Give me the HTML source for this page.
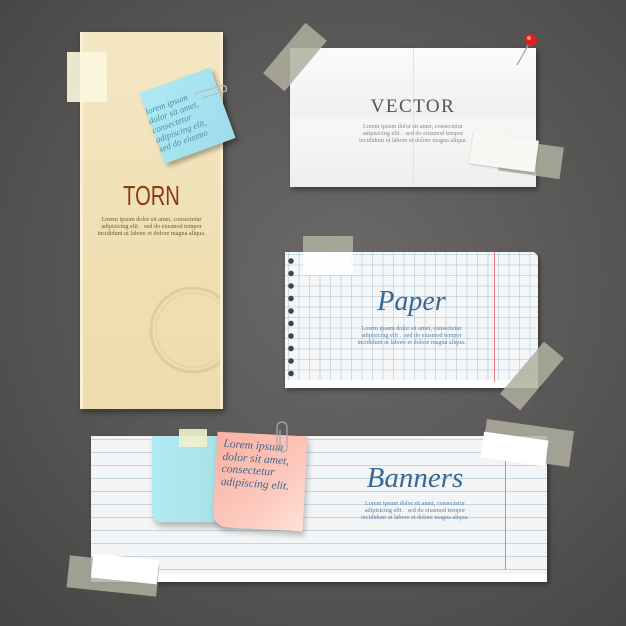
<!DOCTYPE html>
<html><head><meta charset="utf-8">
<style>
*{margin:0;padding:0;box-sizing:border-box}
body{width:626px;height:626px;overflow:hidden;position:relative;background:radial-gradient(ellipse at 55% 45%,#6c6a68 0%,#5a5856 50%,#464442 100%);font-family:"Liberation Serif",serif}
.a{position:absolute}
.body{font-size:6.2px;line-height:7.2px;text-align:center;white-space:nowrap}
.script{font-family:"Liberation Serif",serif;font-style:italic}
.tape{background:rgba(175,175,160,0.85)}
.vec{font-family:"Liberation Serif",serif;font-size:19px;color:#555;letter-spacing:1.5px}
</style></head><body>

<!-- Torn paper -->
<div class="a" style="left:80px;top:32px;width:143px;height:377px;background:linear-gradient(180deg,#f4e7c3,#efdfb3 60%,#eedcae);box-shadow:2px 3px 6px rgba(0,0,0,.4);border-left:3px solid #f8efd4;border-right:3px solid #f6ecd0;overflow:hidden">
<svg class="a" style="left:55px;top:228px" width="90" height="140"><circle cx="55" cy="70" r="42" fill="none" stroke="#d9bc8a" stroke-width="3" opacity=".55"/><circle cx="55" cy="70" r="37" fill="none" stroke="#dcc093" stroke-width="1.2" opacity=".45"/></svg>
</div>
<div class="a" style="left:67px;top:52px;width:40px;height:50px;background:rgba(252,246,222,.9)"></div>
<div class="a" style="left:80px;top:180px;width:143px;text-align:center;font-family:'Liberation Sans',sans-serif;font-size:28px;color:#8d3b12;transform:scaleX(.72)">TORN</div>
<div class="a body" style="left:80px;top:216px;width:143px;color:#6e5a3e">Lorem ipsum dolor sit amet, consectetur<br>adipisicing elit .&nbsp; sed do eiusmod tempor<br>incididunt ut labore et dolore magna aliqua.</div>
<div class="a" style="left:150px;top:78px;width:75px;height:75px;background:linear-gradient(135deg,#aee9f3,#9fdcec);transform:rotate(-20deg);box-shadow:2px 4px 5px rgba(0,0,0,.3)"></div>
<div class="a script" style="left:150px;top:92px;width:80px;font-size:9px;line-height:10px;color:#4b8fa6;transform:rotate(-20deg)">lorem ipsum<br>dolor sit amet,<br>consectetur<br>adipiscing elit,<br>sed do eiusmo</div>
<svg class="a" style="left:192px;top:78px" width="40" height="22"><path d="M2 16 L28 8 Q36 6 34 13 L10 20" fill="none" stroke="#b8bcc0" stroke-width="1.3"/></svg>

<!-- Vector paper -->
<div class="a" style="left:290px;top:48px;width:246px;height:139px;background:linear-gradient(180deg,#fbfbfb,#f0f0f0 48%,#f7f7f7 52%,#eeeeee);box-shadow:2px 3px 5px rgba(0,0,0,.4)"></div>
<div class="a" style="left:413px;top:48px;width:1px;height:139px;background:#e2e2e2"></div>
<div class="a tape" style="left:262px;top:43px;width:66px;height:28px;transform:rotate(-50deg)"></div>
<div class="a vec" style="left:290px;top:96px;width:246px;text-align:center">VECTOR</div>
<div class="a body" style="left:290px;top:123px;width:246px;color:#888">Lorem ipsum dolor sit amet, consectetur<br>adipisicing elit .&nbsp; sed do eiusmod tempor<br>incididunt ut labore et dolore magna aliqua.</div>
<div class="a tape" style="left:500px;top:143px;width:62px;height:32px;transform:rotate(8deg)"></div>
<div class="a" style="left:471px;top:136px;width:66px;height:32px;background:#f8f8f3;transform:rotate(8deg);box-shadow:0 1px 2px rgba(0,0,0,.2)"></div>
<svg class="a" style="left:512px;top:30px" width="30" height="40"><line x1="5" y1="35" x2="18" y2="12" stroke="#aaa" stroke-width="1.3"/><circle cx="19" cy="10" r="6" fill="#e0201c"/><circle cx="17" cy="8" r="2" fill="#ff8a80"/></svg>

<!-- Grid paper -->
<div class="a" style="left:285px;top:252px;width:253px;height:135px;border-radius:0 6px 0 0;box-shadow:2px 3px 5px rgba(0,0,0,.4);background-color:#f4f6f8;background-image:linear-gradient(90deg,rgba(150,185,205,.45) 1px,transparent 1px),linear-gradient(0deg,rgba(150,185,205,.45) 1px,transparent 1px);background-size:10.5px 10.5px;background-position:3px 3px"></div>
<div class="a" style="left:285px;top:380px;width:253px;height:8px;background:#fff"></div>
<div class="a" style="left:494px;top:252px;width:1px;height:130px;background:#f08080"></div>
<div class="a" style="left:287px;top:257px;width:8px;height:122px;background:radial-gradient(circle at 4px 4px,#444 2.5px,transparent 3px);background-size:8px 12.5px"></div>
<div class="a tape" style="left:303px;top:236px;width:50px;height:16px"></div>
<div class="a" style="left:303px;top:252px;width:50px;height:23px;background:rgba(255,255,255,.85)"></div>
<div class="a script" style="left:285px;top:286px;width:253px;text-align:center;font-size:28px;color:#3a6793">Paper</div>
<div class="a body" style="left:285px;top:325px;width:253px;color:#5a7fa0">Lorem ipsum dolor sit amet, consectetur<br>adipisicing elit .&nbsp; sed do eiusmod tempor<br>incididunt ut labore et dolore magna aliqua.</div>
<div class="a tape" style="left:498px;top:363px;width:68px;height:26px;transform:rotate(-50deg)"></div>

<!-- Banner -->
<div class="a" style="left:91px;top:436px;width:456px;height:145px;box-shadow:2px 3px 5px rgba(0,0,0,.4);background-color:#f3f4f5;background-image:linear-gradient(0deg,rgba(160,190,210,.55) 1px,transparent 1px);background-size:100% 13px;background-position:0 4px"></div>
<div class="a" style="left:91px;top:574px;width:456px;height:8px;background:#fff"></div>
<div class="a" style="left:505px;top:440px;width:1px;height:130px;background:#f08080"></div>
<div class="a tape" style="left:484px;top:425px;width:88px;height:36px;transform:rotate(8deg)"></div>
<div class="a" style="left:482px;top:436px;width:65px;height:26px;background:#fff;transform:rotate(8deg)"></div>
<div class="a tape" style="left:68px;top:560px;width:90px;height:32px;transform:rotate(6deg)"></div>
<div class="a" style="left:92px;top:557px;width:66px;height:24px;background:#fff;transform:rotate(6deg)"></div>
<div class="a" style="left:152px;top:436px;width:80px;height:86px;background:linear-gradient(90deg,#b0ecf3,#a8dee5);box-shadow:2px 5px 6px rgba(0,0,0,.25);border-radius:0 0 0 10px"></div>
<div class="a" style="left:179px;top:429px;width:28px;height:18px;background:rgba(240,240,205,.9)"></div>
<div class="a" style="left:215px;top:434px;width:90px;height:95px;background:linear-gradient(135deg,#fbb0a2,#fcc8bc 60%,#fde2d8);transform:rotate(3deg);box-shadow:2px 4px 6px rgba(0,0,0,.25);border-radius:0 0 0 14px"></div>
<div class="a script" style="left:222px;top:441px;width:90px;font-size:11.5px;line-height:12.5px;color:#3f6791;transform:rotate(4deg)">Lorem ipsum<br>dolor sit amet,<br>consectetur<br>adipiscing elit.</div>
<svg class="a" style="left:272px;top:420px" width="18" height="36"><path d="M5 32 L5 8 Q5 2 10 2 Q15 2 15 8 L15 28 Q15 32 11 32 Q8 32 8 28 L8 10" fill="none" stroke="#a8acb0" stroke-width="1.2"/></svg>
<div class="a script" style="left:340px;top:462px;width:150px;text-align:center;font-size:29px;color:#3a6793">Banners</div>
<div class="a body" style="left:340px;top:500px;width:150px;color:#5a7fa0">Lorem ipsum dolor sit amet, consectetur<br>adipisicing elit .&nbsp; sed do eiusmod tempor<br>incididunt ut labore et dolore magna aliqua.</div>
</body></html>
